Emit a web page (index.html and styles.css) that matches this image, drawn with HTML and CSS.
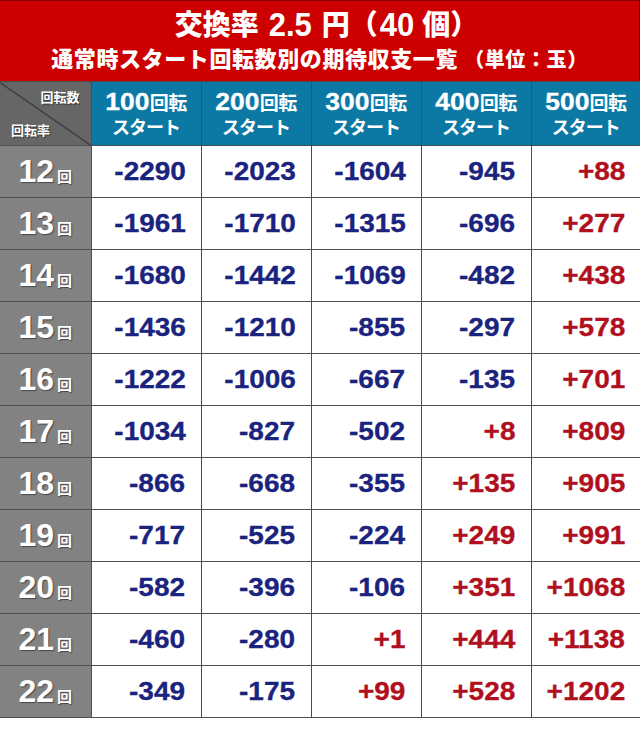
FILE: index.html
```html
<!DOCTYPE html>
<html lang="ja">
<head>
<meta charset="utf-8">
<link rel="stylesheet" href="styles.css">
</head>
<body>
<div class="sheet">
  <header class="banner">
    <div class="title">交換率<span class="tn t1">2.5</span>円（<span class="tn t2">40</span>個）</div>
    <div class="subtitle">通常時スタート回転数別の期待収支一覧<span class="unit"> （単位：玉）</span></div>
  </header>
  <table class="grid">
    <colgroup>
      <col class="c-label"><col class="c-val"><col class="c-val"><col class="c-val"><col class="c-val"><col class="c-last">
    </colgroup>
    <thead>
      <tr>
        <th class="corner"><span class="ct">回転数</span><span class="cb">回転率</span></th>
        <th class="colh"><div class="l1"><span class="big">100</span>回転</div><div class="l2">スタート</div></th>
        <th class="colh"><div class="l1"><span class="big">200</span>回転</div><div class="l2">スタート</div></th>
        <th class="colh"><div class="l1"><span class="big">300</span>回転</div><div class="l2">スタート</div></th>
        <th class="colh"><div class="l1"><span class="big">400</span>回転</div><div class="l2">スタート</div></th>
        <th class="colh"><div class="l1"><span class="big">500</span>回転</div><div class="l2">スタート</div></th>
      </tr>
    </thead>
    <tbody>
      <tr><th class="rowh">12<small>回</small></th><td class="n neg"><span>-2290</span></td><td class="n neg"><span>-2023</span></td><td class="n neg"><span>-1604</span></td><td class="n neg"><span>-945</span></td><td class="n pos"><span>+88</span></td></tr>
      <tr><th class="rowh">13<small>回</small></th><td class="n neg"><span>-1961</span></td><td class="n neg"><span>-1710</span></td><td class="n neg"><span>-1315</span></td><td class="n neg"><span>-696</span></td><td class="n pos"><span>+277</span></td></tr>
      <tr><th class="rowh">14<small>回</small></th><td class="n neg"><span>-1680</span></td><td class="n neg"><span>-1442</span></td><td class="n neg"><span>-1069</span></td><td class="n neg"><span>-482</span></td><td class="n pos"><span>+438</span></td></tr>
      <tr><th class="rowh">15<small>回</small></th><td class="n neg"><span>-1436</span></td><td class="n neg"><span>-1210</span></td><td class="n neg"><span>-855</span></td><td class="n neg"><span>-297</span></td><td class="n pos"><span>+578</span></td></tr>
      <tr><th class="rowh">16<small>回</small></th><td class="n neg"><span>-1222</span></td><td class="n neg"><span>-1006</span></td><td class="n neg"><span>-667</span></td><td class="n neg"><span>-135</span></td><td class="n pos"><span>+701</span></td></tr>
      <tr><th class="rowh">17<small>回</small></th><td class="n neg"><span>-1034</span></td><td class="n neg"><span>-827</span></td><td class="n neg"><span>-502</span></td><td class="n pos"><span>+8</span></td><td class="n pos"><span>+809</span></td></tr>
      <tr><th class="rowh">18<small>回</small></th><td class="n neg"><span>-866</span></td><td class="n neg"><span>-668</span></td><td class="n neg"><span>-355</span></td><td class="n pos"><span>+135</span></td><td class="n pos"><span>+905</span></td></tr>
      <tr><th class="rowh">19<small>回</small></th><td class="n neg"><span>-717</span></td><td class="n neg"><span>-525</span></td><td class="n neg"><span>-224</span></td><td class="n pos"><span>+249</span></td><td class="n pos"><span>+991</span></td></tr>
      <tr><th class="rowh">20<small>回</small></th><td class="n neg"><span>-582</span></td><td class="n neg"><span>-396</span></td><td class="n neg"><span>-106</span></td><td class="n pos"><span>+351</span></td><td class="n pos"><span>+1068</span></td></tr>
      <tr><th class="rowh">21<small>回</small></th><td class="n neg"><span>-460</span></td><td class="n neg"><span>-280</span></td><td class="n pos"><span>+1</span></td><td class="n pos"><span>+444</span></td><td class="n pos"><span>+1138</span></td></tr>
      <tr><th class="rowh">22<small>回</small></th><td class="n neg"><span>-349</span></td><td class="n neg"><span>-175</span></td><td class="n pos"><span>+99</span></td><td class="n pos"><span>+528</span></td><td class="n pos"><span>+1202</span></td></tr>
    </tbody>
  </table>
</div>
</body>
</html>
```

FILE: styles.css
```css
html, body {
  margin: 0;
  padding: 0;
  background: #ffffff;
}
body {
  font-family: "Liberation Sans", "Noto Sans CJK JP", sans-serif;
  font-weight: 700;
}
.sheet {
  width: 640px;
}
.banner {
  box-sizing: border-box;
  height: 81px;
  background: #cc0000;
  border-top: 1px solid #8a0000;
  border-right: 1px solid #8a0000;
  color: #ffffff;
  text-align: center;
  padding-top: 5px;
}
.title {
  font-size: 28px;
  line-height: 38px;
  font-weight: 900;
  padding-left: 14px;
}
.title .tn {
  display: inline-block;
  font-size: 31px;
  font-weight: 700;
  transform: scaleY(1.08);
}
.title .t1 {
  margin: 0 10px 0 10px;
}
.title .t2 {
  margin: 0 8px 0 2px;
}
.subtitle {
  font-size: 22px;
  line-height: 30px;
  letter-spacing: 0.6px;
  font-weight: 900;
}
.subtitle .unit {
  font-size: 20px;
}
.grid {
  width: 640px;
  border-collapse: collapse;
  table-layout: fixed;
}
.c-label { width: 91px; }
.c-val { width: 110px; }
.c-last { width: 109px; }
.grid th, .grid td {
  border: 1px solid #4d4d4d;
  padding: 0;
}
.grid tr > :first-child { border-left: none; }
.grid tr > :last-child { border-right: none; }
thead tr { height: 64px; }
.corner {
  position: relative;
  background-color: #666666;
  background-image: linear-gradient(to top right, transparent calc(50% - 0.8px), #1e1e1e 50%, transparent calc(50% + 0.8px));
  color: #ffffff;
  font-size: 13px;
  text-shadow: 1px 1px 1px rgba(0,0,0,0.5);
}
.corner .ct {
  position: absolute;
  top: 5px;
  right: 11px;
}
.corner .cb {
  position: absolute;
  bottom: 6px;
  left: 11px;
}
.colh {
  background: #0c78a4;
  color: #ffffff;
  text-align: center;
  vertical-align: middle;
  font-weight: 700;
}
.colh .l1 {
  font-size: 19px;
  line-height: 28px;
  letter-spacing: -0.5px;
}
.colh .l1 .big {
  display: inline-block;
  font-size: 23px;
  letter-spacing: 0;
  transform: scaleX(1.15);
  transform-origin: right center;
  margin-left: 6px;
  -webkit-text-stroke: 0.3px currentColor;
}
.colh .l2 {
  font-size: 18px;
  line-height: 24px;
  letter-spacing: -1px;
  margin-top: -2px;
}
tbody tr { height: 52px; }
.rowh {
  background: #828282;
  color: #ffffff;
  font-size: 32px;
  text-align: center;
  text-shadow: 1px 1px 1px rgba(0,0,0,0.45);
  padding-top: 2px;
}
.rowh small {
  font-size: 15px;
  margin-left: 3px;
}
.n {
  text-align: right;
  padding-right: 15px !important;
  font-size: 25px;
  vertical-align: middle;
}
.n span {
  display: inline-block;
  transform: scaleX(1.12);
  transform-origin: right center;
  -webkit-text-stroke: 0.3px currentColor;
}
.neg { color: #1a237e; }
.pos { color: #b0101e; }
```
